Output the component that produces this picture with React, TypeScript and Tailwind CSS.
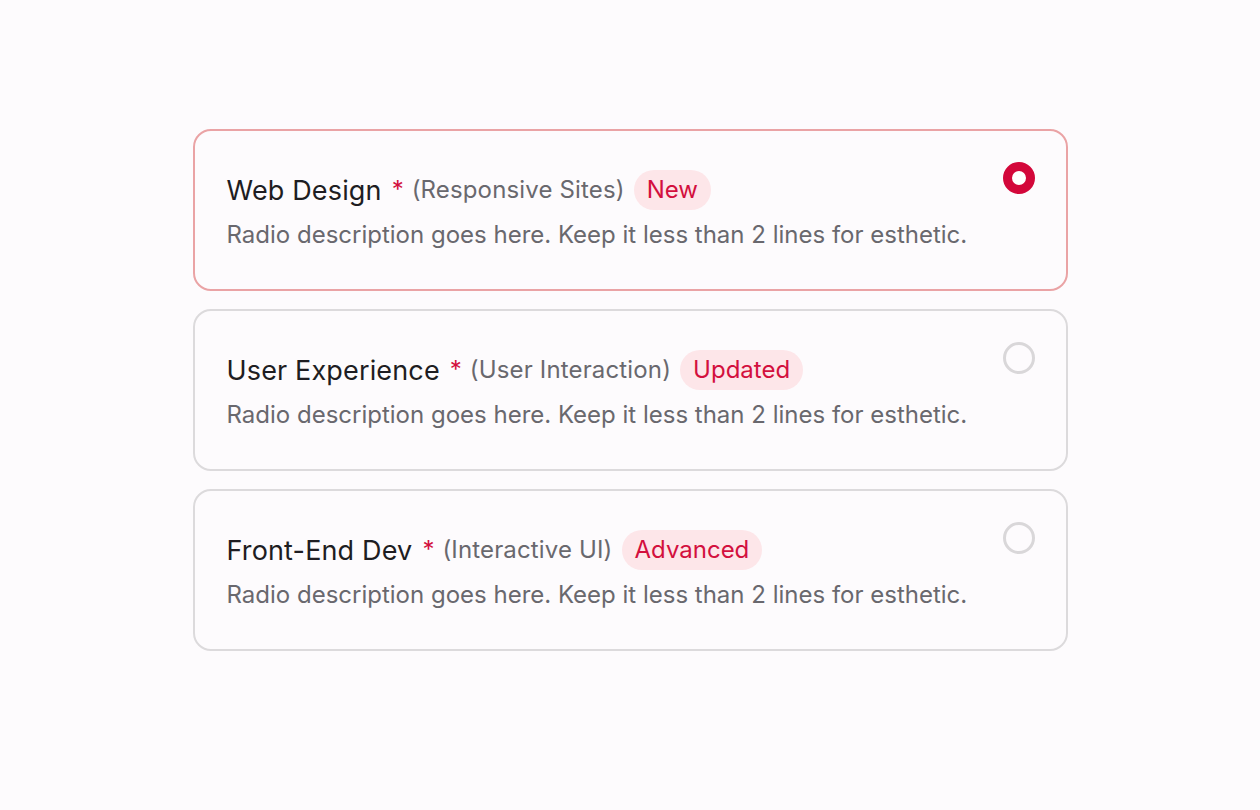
import React from "react";

type Item = { title: string; sub: string; badge: string; selected: boolean };

const items: Item[] = [
  { title: "Web Design", sub: "(Responsive Sites)", badge: "New", selected: true },
  { title: "User Experience", sub: "(User Interaction)", badge: "Updated", selected: false },
  { title: "Front-End Dev", sub: "(Interactive UI)", badge: "Advanced", selected: false },
];

export default function App() {
  return (
    <div
      className="min-h-[810px] w-full bg-[#fdfbfd] pt-[129px]"
      style={{ fontFamily: "Inter, 'Noto Sans', sans-serif" }}
    >
      <div className="mx-auto flex w-[875px] flex-col gap-[18px]">
        {items.map((it) => (
          <div
            key={it.title}
            className={
              it.selected
                ? "flex items-start justify-between rounded-[18px] border-2 border-[#eaa3a5] bg-[#fdfbfd] p-[31px]"
                : "flex items-start justify-between rounded-[18px] border-2 border-[#dcdadc] bg-[#fdfbfd] p-[31px]"
            }
          >
            <div className="flex flex-col pt-[8px] pb-[8px] pl-[1px]">
              <div className="flex h-[40px] items-center">
                <span className="text-[27px] leading-none tracking-[0.15px] text-[#1e1d22]">{it.title}</span>
                <span className="ml-[10px] text-[24px] leading-none text-[#d3103e]">*</span>
                <span className="ml-[8px] text-[24px] leading-none tracking-[0.15px] text-[#69686e]">{it.sub}</span>
                <span className="ml-[9px] flex h-[40px] items-center rounded-full bg-[#fde6e9] px-[13px] text-[24px] leading-none text-[#d3103e]">
                  {it.badge}
                </span>
              </div>
              <div className="mt-[10px] text-[24px] leading-[30px] text-[#69686e]">
                Radio description goes here. Keep it less than 2 lines for esthetic.
              </div>
            </div>
            {it.selected ? (
              <div className="h-[32px] w-[32px] rounded-full border-[9px] border-[#d3073a] bg-white" />
            ) : (
              <div className="h-[32px] w-[32px] rounded-full border-[3px] border-[#d9d7d9] bg-[#fdfbfd]" />
            )}
          </div>
        ))}
      </div>
    </div>
  );
}
